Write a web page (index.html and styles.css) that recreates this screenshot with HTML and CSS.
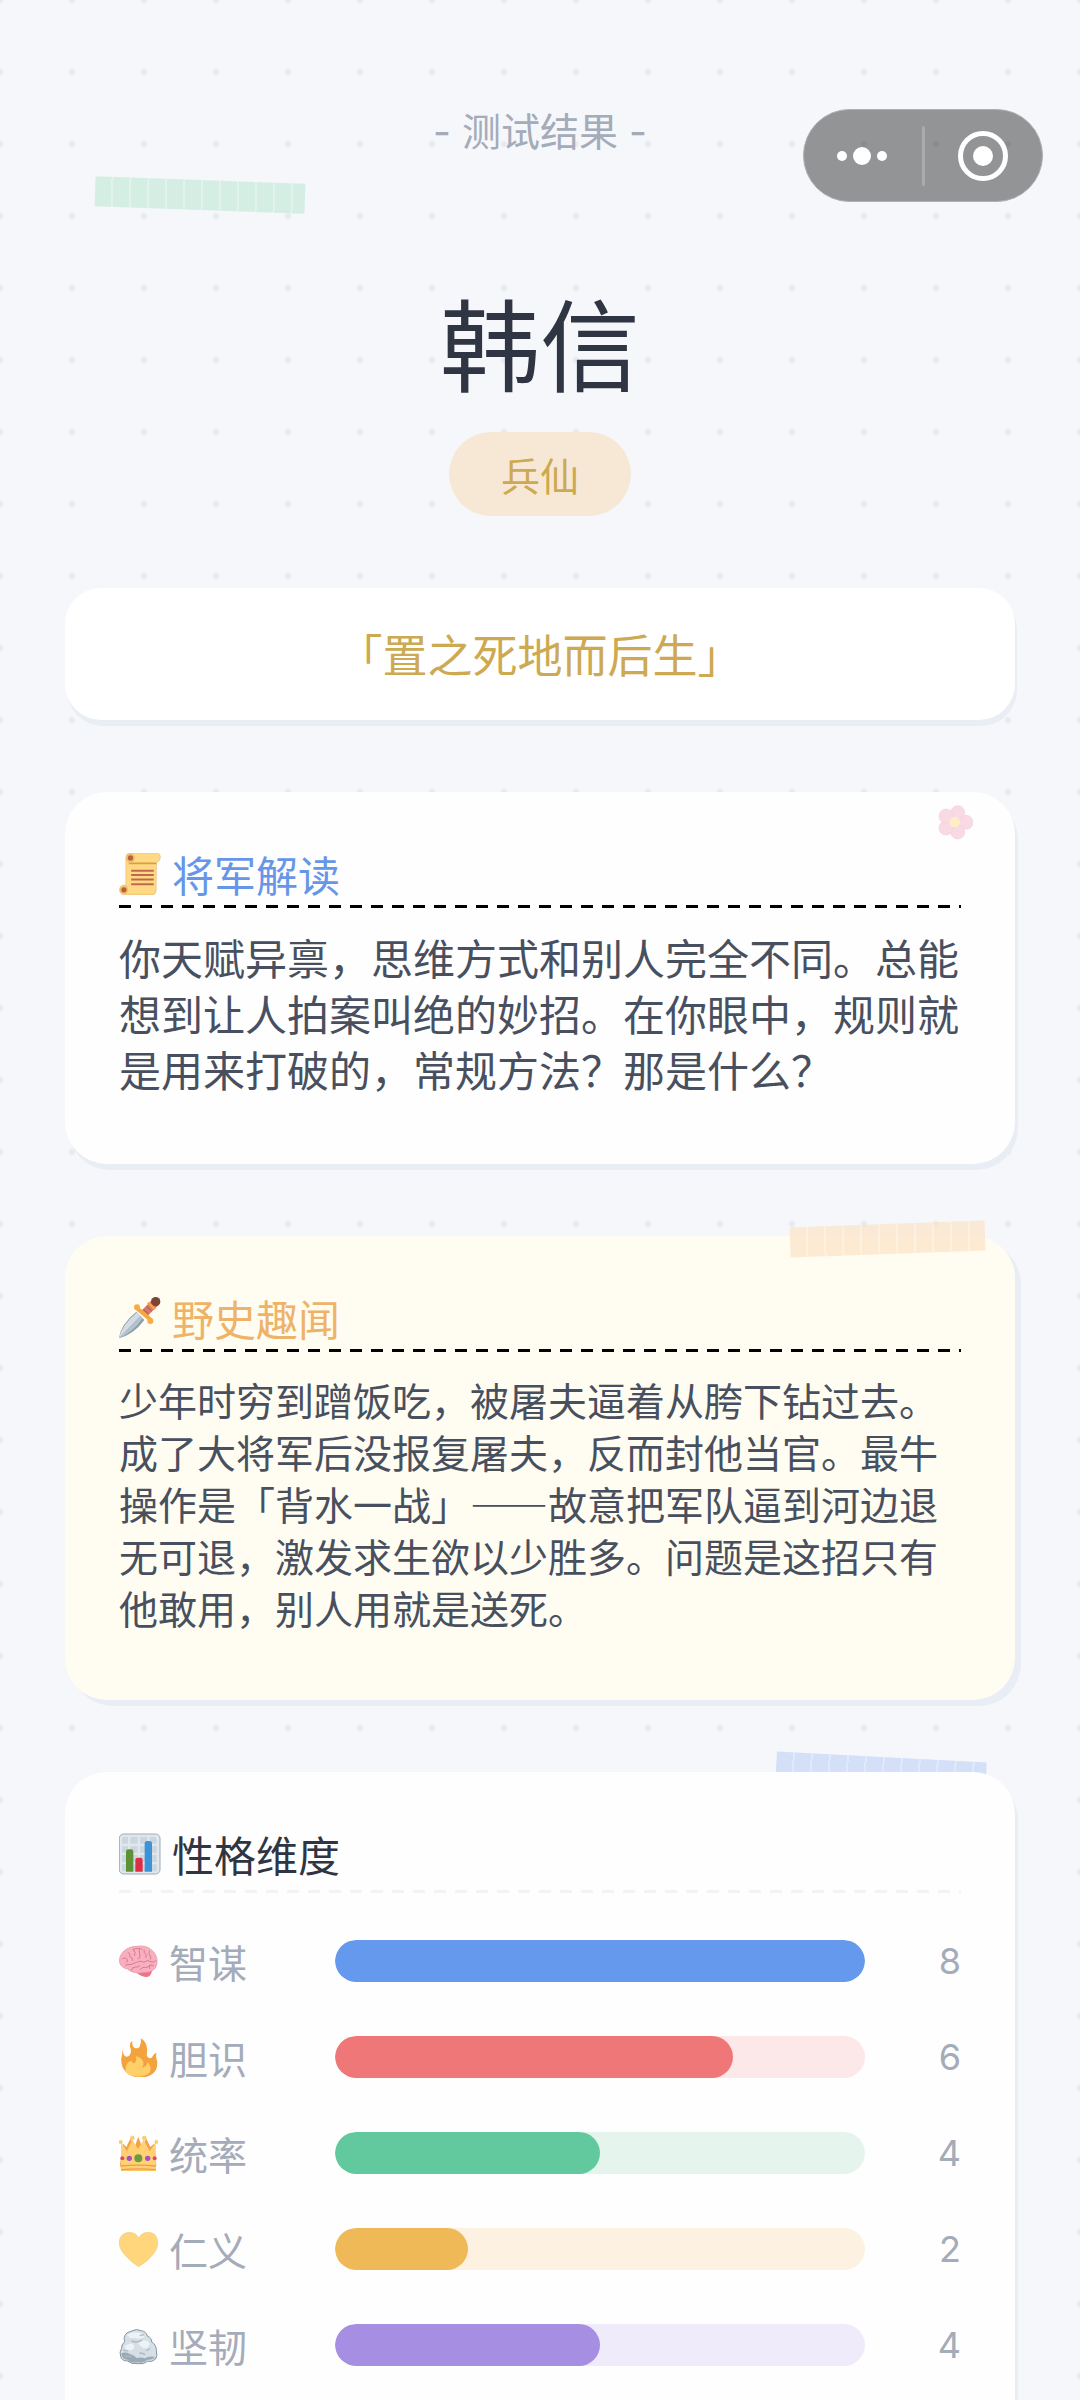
FILE: index.html
```html
<!DOCTYPE html>
<html lang="zh-CN">
<head>
	<meta charset="utf-8">
	<meta name="viewport" content="width=device-width, initial-scale=1">
	<title>测试结果</title>
	<link rel="stylesheet" href="styles.css">
</head>
<body>

<div class="capsule">
	<button type="button" class="capsuleBtn" aria-label="更多">
		<svg width="52" height="52" viewBox="0 0 52 52" fill="#fff"><circle cx="5" cy="26" r="5"/><circle cx="25" cy="26" r="9"/><circle cx="45" cy="26" r="5"/></svg>
	</button>
	<span class="capsuleLine"></span>
	<button type="button" class="capsuleBtn" aria-label="关闭">
		<svg width="52" height="52" viewBox="0 0 52 52"><circle cx="26" cy="26" r="22.5" fill="none" stroke="#fff" stroke-width="5"/><circle cx="26" cy="26" r="10" fill="#fff"/></svg>
	</button>
</div>

<main class="page">
	<header class="hero">
		<span class="tape tapeGreen"></span>
		<p class="heroLabel">- 测试结果 -</p>
		<h1>韩信</h1>
		<span class="tag">兵仙</span>
	</header>

	<p class="quote">「置之死地而后生」</p>

	<section class="card">
		<svg class="flower" viewBox="0 0 108 108">
			<g fill="#f3adc4" stroke="#e79ab5" stroke-width="2">
				<circle cx="62" cy="26" r="21"/><circle cx="87" cy="55" r="21"/><circle cx="62" cy="84" r="21"/><circle cx="27" cy="72" r="21"/><circle cx="27" cy="36" r="21"/>
			</g>
			<circle cx="53" cy="54" r="16" fill="#ffd983"/>
		</svg>
		<h2 class="blue">
			<svg class="icon" viewBox="0 0 126 128">
				<path d="M28 1h88q9 1 9 12 0 12-12 16l-1 84q0 14-12 14H14Q1 125 1 112q0-13 13-14h6V28q-2-25 8-27z" fill="#ffd983" stroke="#e6bb78" stroke-width="2"/>
				<path d="M28 29h85v5H30z" fill="#d99e42"/>
				<path d="M22 98q8 13-4 28h82q10-2 11-12" fill="none" stroke="#f4c778" stroke-width="3"/>
				<circle cx="34" cy="15" r="14" fill="#f2bd6c"/><circle cx="34" cy="15" r="8" fill="#b5633c"/>
				<circle cx="14" cy="112" r="13" fill="#f2bd6c"/><circle cx="14" cy="112" r="8" fill="#b5633c"/>
				<path d="M36 54h69M36 67h69M36 81h69M36 95h69" stroke="#c1694f" stroke-width="6"/>
			</svg>
			将军解读
		</h2>
		<p class="text">你天赋异禀，思维方式和别人完全不同。总能想到让人拍案叫绝的妙招。在你眼中，规则就是用来打破的，常规方法？那是什么？</p>
	</section>

	<section class="card cardStory">
		<span class="tape tapePeach"></span>
		<h2 class="orange">
			<svg class="icon" viewBox="0 0 126 126">
				<path d="M0 124q5-42 52-80l24 25Q44 112 0 124z" fill="#8a9ca9"/>
				<path d="M0 124q8-39 54-78l10 11z" fill="#d2dce2"/>
				<path d="M0 124L64 57l7 7Q43 105 0 124z" fill="#b3c3ce"/>
				<path d="M66 43l32-33 17 18-32 31z" fill="#d8776b"/>
				<path d="M73 37l16 14M82 28l16 14M91 19l16 14" stroke="#a8574f" stroke-width="3"/>
				<circle cx="110" cy="14" r="14" fill="#7b4434"/>
				<path d="M90 14l21 20-6 5-21-20z" fill="#f3a344"/>
				<path d="M52 32l45 38" stroke="#f4a63f" stroke-width="12"/>
				<circle cx="54" cy="31" r="9" fill="#f7ad47"/><circle cx="94" cy="72" r="9" fill="#f7ad47"/>
			</svg>
			野史趣闻
		</h2>
		<p class="text">少年时穷到蹭饭吃，被屠夫逼着从胯下钻过去。成了大将军后没报复屠夫，反而封他当官。最牛操作是「背水一战」——故意把军队逼到河边退无可退，激发求生欲以少胜多。问题是这招只有他敢用，别人用就是送死。</p>
	</section>

	<section class="card cardStats">
		<span class="tape tapeBlue"></span>
		<h2>
			<svg class="icon" viewBox="0 0 126 126">
				<rect x="1" y="3" width="122" height="120" rx="13" fill="#e1e8ed" stroke="#9dabb5" stroke-width="3"/>
				<g fill="#ccd6dd">
					<path d="M9 18q0-7 7-7h11v21H9zM34 11h22v21H34zM63 11h22v21H63zM92 11h13q8 0 8 8v13H92z"/>
					<path d="M9 39h18v20H9zM34 39h22v20H34zM63 39h22v20H63zM92 39h21v20H92zM9 66h18v21H9zM34 66h22v21H34zM63 66h22v21H63zM92 66h21v21H92zM9 94h18v21H9zM34 94h22v21H34zM63 94h22v21H63zM92 94h21v21H92z"/>
				</g>
				<path d="M21 116V56q0-7 7-7h8q7 0 7 7v60z" fill="#5c9136"/>
				<path d="M49 116V81q0-7 7-7h8q7 0 7 7v35z" fill="#dd2e44"/>
				<path d="M77 116V31q0-7 7-7h8q7 0 7 7v85z" fill="#3b94d9"/>
			</svg>
			性格维度
		</h2>
		<dl class="stats">
			<div class="stat wit">
				<dt>
					<svg class="icon" viewBox="0 0 117 117">
						<path d="M48 88q18 18 35 17 13-1 16-18L67 80z" fill="#ee7386"/>
						<path d="M54 13q29-5 45 12 17 15 15 38-2 17-14 23-9 6-22 5-10 3-22 2-24-3-30-12Q6 77 2 62-1 41 15 27 30 13 54 13z" fill="#f9afc0" stroke="#de8fa1" stroke-width="2"/>
						<g fill="none" stroke="#d37d92" stroke-width="3" stroke-linecap="round">
							<path d="M11 50q10-6 14 3 3 6-3 8M27 31q8 2 5 13 10 2 9 11M44 23q7 8 3 18M60 22l3 21q-1 7-6 7M75 24q-2 8 6 13v9M91 27q-4 9 3 15 4 7 0 10"/>
							<path d="M20 69q20 0 32-8 14-7 23 0 9-10 21-2 9 5 14-3M38 84q0-9 12-9 9 1 13-4M63 83q8-10 17-7 8 2 12-6 7 2 12 0"/>
							<path d="M42 22q19-6 27 0M92 80q-4-8 3-12"/>
						</g>
					</svg>
					智谋
				</dt>
				<dd class="track"><span class="fill" style="width:100%"></span></dd>
				<dd class="num">8</dd>
			</div>
			<div class="stat brave">
				<dt>
					<svg class="icon" viewBox="0 0 117 117">
						<path d="M13 29q-4 22 8 27 10 1 13-8 4-10-1-22-2-13 7-17-2 19 9 22 11 1 14-8 4-10 2-22 17 9 19 30 1 10-1 20 2 9 8 10 8 0 11-8 2-6 11-9-4 11 1 24 4 26-14 40-17 13-46 10-27-3-42-27-9-19-3-39 1-12 4-23z" fill="#f4a23d"/>
						<path d="M21 103q-5-23 11-33 6-3 10 4 3 5 7-1 6-9 1-19 18 4 23 19 2 8-4 15 13 1 17-16 12 12 7 31-11 12-35 13-24 0-37-13z" fill="#ffcf69"/>
					</svg>
					胆识
				</dt>
				<dd class="track"><span class="fill" style="width:75%"></span></dd>
				<dd class="num">6</dd>
			</div>
			<div class="stat lead">
				<dt>
					<svg class="icon" viewBox="0 0 117 117">
						<path d="M12 29l10 10 12-25 14 22 10-28 10 28 14-22 12 25 11-10 7 62-5 20H7L3 91z" fill="#f3a246"/>
						<path d="M6 25l18 27 16-35 17 28 17-28 18 35 18-27 1 85H6z" fill="#ffd172"/>
						<g fill="#ffcf6c" stroke="#e6a950" stroke-width="1"><circle cx="5" cy="24" r="5"/><circle cx="40" cy="12" r="6"/><circle cx="76" cy="12" r="6"/><circle cx="112" cy="24" r="5"/></g>
						<path d="M6 96q51-5 105 0M6 107q51-5 105 0" stroke="#e8a04d" stroke-width="4" fill="none"/>
						<circle cx="10" cy="73" r="6" fill="#d84f59"/><circle cx="107" cy="73" r="6" fill="#d84f59"/>
						<circle cx="31" cy="73" r="8" fill="#a84fc2"/><circle cx="86" cy="73" r="8" fill="#a84fc2"/>
						<circle cx="58" cy="73" r="12" fill="#6d9c3e"/>
					</svg>
					统率
				</dt>
				<dd class="track"><span class="fill" style="width:50%"></span></dd>
				<dd class="num">4</dd>
			</div>
			<div class="stat kind">
				<dt>
					<svg class="icon" viewBox="0 0 117 117">
						<path d="M59 110Q35 97 13 70-3 49 1 29 8 8 30 7q20 0 29 16Q69 7 89 7q21 1 27 22 4 20-11 41-19 26-46 40z" fill="#ffd67b" stroke="#dfbd76" stroke-width="1"/>
					</svg>
					仁义
				</dt>
				<dd class="track"><span class="fill" style="width:25%"></span></dd>
				<dd class="num">2</dd>
			</div>
			<div class="stat tough">
				<dt>
					<svg class="icon" viewBox="0 0 117 117">
						<path d="M18 28q3-9 20-13 14-8 29-1 14 2 18 16 13 5 13 18 14 8 14 25 4 18-2 26-11 10-24 7-13 10-29 7-20 2-31-8Q7 105 5 91 0 78 8 67q-2-10 9-20-4-11 1-19z" fill="#d5dfe6" stroke="#89969e" stroke-width="3"/>
						<path d="M24 28q14-13 37-8 13 2 15 13-15 9-29 3-12 4-23-8zM16 64q10-14 26-11 9 13-4 19-14 5-22-8zM56 49q17-12 34-1 5 14-9 19-16 0-25-18z" fill="#edf3f6"/>
						<path d="M7 82q13-5 24 1 15 4 22 13 14-4 25 1 12-8 30-4-7 9-22 8-14 12-29 8-23 3-31-8Q9 102 7 82z" fill="#9aaab5"/>
						<path d="M37 45l13 3q14 0 19-7M12 72q9 4 16 2M61 81q14 0 17 6M80 74q8-1 12-7M17 90l22 2M75 26l-13 3" stroke="#adbac3" stroke-width="4" fill="none"/>
					</svg>
					坚韧
				</dt>
				<dd class="track"><span class="fill" style="width:50%"></span></dd>
				<dd class="num">4</dd>
			</div>
		</dl>
	</section>
</main>

</body>
</html>
```

FILE: styles.css
```css
* {box-sizing: border-box;}

body {
	margin: 0;
	height: 100vh;
	overflow: hidden;
	position: relative;
	font-family: "Noto Sans CJK SC", sans-serif;
	font-size: 39px;
	line-height: 52px;
	color: #2f3542;
	background-color: #f5f7fb;
	background-image: radial-gradient(circle, #e8eaee 2px, transparent 4px);
	background-size: 72px 72px;
	background-position: -36px -36px;
}

h1, h2, p, dl, dd {margin: 0;font-weight: 400;}

.page {
	position: relative;
	z-index: 0;
	display: flex;
	flex-direction: column;
	gap: 72px;
	padding: 106px 65px 72px;
}

/* mini program menu */
.capsule {
	position: absolute;
	z-index: 2;
	top: 109px;
	right: 37px;
	display: flex;
	align-items: center;
	width: 240px;
	height: 93px;
	border: 1px solid #aeb0b2;
	border-radius: 48px;
	background: rgba(0,0,0,0.4);
}
.capsuleBtn {flex: 1;display: flex;justify-content: center;padding: 0;border: 0;background: none;cursor: pointer;}
.capsuleLine {width: 3px;height: 60px;border-radius: 2px;background: #a9abac;}

.hero {display: flex;flex-direction: column;align-items: center;}
.heroLabel {font-family: Inter, "Noto Sans CJK SC", sans-serif;color: #a4abb9;}
.hero h1 {margin: 115px 0 23px;font-size: 100px;line-height: 136px;}
.tag {padding: 16px 52px;border-radius: 42px;background: rgba(246,229,206,0.85);color: #cda951;}

.quote {
	padding: 36px;
	border-radius: 36px;
	background: #fff;
	box-shadow: 2px 6px 0 #e9edf4;
	font-size: 45px;
	line-height: 60px;
	text-align: center;
	color: #cda951;
}

.card {
	position: relative;
	padding: 54px 54px 67px;
	border-radius: 42px;
	background: #fefefe;
	box-shadow: 3px 6px 0 #e9edf4;
}
.card h2 {
	position: relative;
	display: flex;
	align-items: center;
	gap: 11px;
	padding-bottom: 6px;
	margin-bottom: 21px;
	font-size: 42px;
	line-height: 56px;
	background: repeating-linear-gradient(90deg, #000 0 12px, transparent 12px 21px) left bottom / 100% 3px no-repeat;
}
.card h2.blue {color: #6796e8;}
.card h2.orange {color: #eeb368;}
.icon {flex: none;width: 42px;height: 42px;}

.text {font-size: 42px;line-height: 56px;color: #485060;}

.cardStory {background: #fffdf1;box-shadow: 6px 6px 0 #e9edf6;}
.cardStory .text {font-size: 39px;line-height: 52px;}

.flower {position: absolute;top: 12px;right: 42px;width: 36px;height: 36px;opacity: 0.45;}

/* washi tape */
.tape {
	position: absolute;
	width: 210px;
	height: 30px;
	background-image: repeating-linear-gradient(90deg, transparent 0 16px, rgba(255,255,255,0.3) 16px 18px);
}
.tapeGreen {top: 180px;left: 95px;background-color: #d5eee4;transform: rotate(2deg);}
.tapePeach {top: -12px;right: 30px;width: 195px;background-color: rgba(251,226,196,0.7);transform: rotate(-2deg);}
.tapeBlue {top: -15px;right: 29px;z-index: -1;background-color: #d4dff8;transform: rotate(3deg);}

.cardStats h2 {
	padding-bottom: 11px;
	margin-bottom: 42px;
	background-image: repeating-linear-gradient(90deg, #f2f3f5 0 12px, transparent 12px 21px);
}

.stats {display: grid;gap: 44px;}
.stat {display: grid;grid-template-columns: 216px 1fr 96px;align-items: center;}
.stat dt {display: flex;align-items: center;gap: 11px;color: #a4abb9;}
.stat .icon {width: 39px;height: 39px;}
.track {height: 42px;border-radius: 21px;overflow: hidden;}
.fill {display: block;height: 100%;border-radius: 21px;}
.num {font-family: Inter, "Noto Sans CJK SC", sans-serif;font-size: 36px;text-align: right;color: #a4abb9;}

.wit .track {background: #e4edfc;}
.wit .fill {background: #6499ee;}
.brave .track {background: #fce8e8;}
.brave .fill {background: #f07777;}
.lead .track {background: #e5f5ee;}
.lead .fill {background: #62c99e;}
.kind .track {background: #fdf2e1;}
.kind .fill {background: #f0b957;}
.tough .track {background: #f0ebfb;}
.tough .fill {background: #a68ee3;}
```
